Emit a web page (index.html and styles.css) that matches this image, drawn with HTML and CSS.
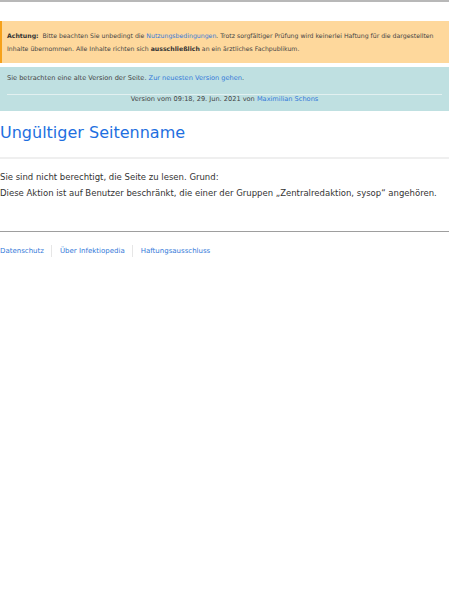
FILE: index.html
```html
<!DOCTYPE html>
<html lang="de">
<head>
  <meta charset="UTF-8" />
  <meta name="viewport" content="width=device-width, initial-scale=1.0" />
  <title>Ungültiger Seitenname – Infektiopedia</title>
  <link rel="stylesheet" href="styles.css">
</head>
<body>
  <!-- bottom edge of the site header -->
  <div class="header-edge"></div>

  <!-- Hinweis: Haftung -->
  <div class="notice notice-warn">
    <b>Achtung:</b>&nbsp; Bitte beachten Sie unbedingt die <a href="#">Nutzungsbedingungen</a>. Trotz sorgfältiger Prüfung wird keinerlei Haftung für die dargestellten Inhalte übernommen. Alle Inhalte richten sich <b>ausschließlich</b> an ein ärztliches Fachpublikum.
  </div>

  <!-- Alte Version -->
  <div class="notice notice-old">
    <div class="old-text">Sie betrachten eine alte Version der Seite. <a href="#">Zur neuesten Version gehen</a>.</div>
    <div class="old-meta">Version vom 09:18, 29. Jun. 2021 von <a href="#">Maximilian Schons</a></div>
  </div>

  <h1 class="page-title">Ungültiger Seitenname</h1>

  <div class="content">
    <p>Sie sind nicht berechtigt, die Seite zu lesen. Grund:</p>
    <p>Diese Aktion ist auf Benutzer beschränkt, die einer der Gruppen „Zentralredaktion, sysop“ angehören.</p>
  </div>

  <ul class="footer-links">
    <li><a href="#">Datenschutz</a></li>
    <li><a href="#">Über Infektiopedia</a></li>
    <li><a href="#">Haftungsausschluss</a></li>
  </ul>
</body>
</html>
```

FILE: styles.css
```css
body {
  margin: 0;
  font-family: "DejaVu Sans", Verdana, sans-serif;
  color: #333;
  background: #fff;
}

a {
  color: #3479d9;
  text-decoration: none;
}

.header-edge {
  height: 2px;
  background: #b8b8b8;
  margin-bottom: 19px;
}

.notice {
  padding: 7px 7px;
}

.notice-warn {
  background: #fed89c;
  border-left: 2px solid #f6a11a;
  padding-left: 5px;
  font-size: 6.2px;
  line-height: 13.5px;
  padding-top: 7.5px;
  padding-bottom: 7.5px;
  color: #444;
}

.notice-warn b {
  color: #333;
}

.notice-old {
  margin-top: 4px;
  background: #bfe0e1;
  font-size: 6.6px;
  line-height: 9.5px;
  color: #444;
}

.old-text {
  padding-bottom: 10px;
  border-bottom: 1px solid #e2f0f0;
}

.old-meta {
  text-align: center;
}

.page-title {
  margin: 12px 0 0;
  padding-bottom: 15px;
  font-size: 16px;
  line-height: 19px;
  font-weight: normal;
  color: #1e6fe0;
  border-bottom: 2px solid #efefef;
}

.content {
  margin-top: 10px;
  padding-bottom: 30px;
  border-bottom: 1px solid #9e9e9e;
  font-size: 8.5px;
  line-height: 16px;
}

.content p {
  margin: 0;
}

.footer-links {
  list-style: none;
  margin: 13px 0 0;
  padding: 0;
  display: flex;
  font-size: 7px;
  line-height: 12px;
}

.footer-links li {
  padding: 0 7.5px;
  border-left: 1px solid #e6e6e6;
}

.footer-links li:first-child {
  padding-left: 0;
  border-left: none;
}
```
